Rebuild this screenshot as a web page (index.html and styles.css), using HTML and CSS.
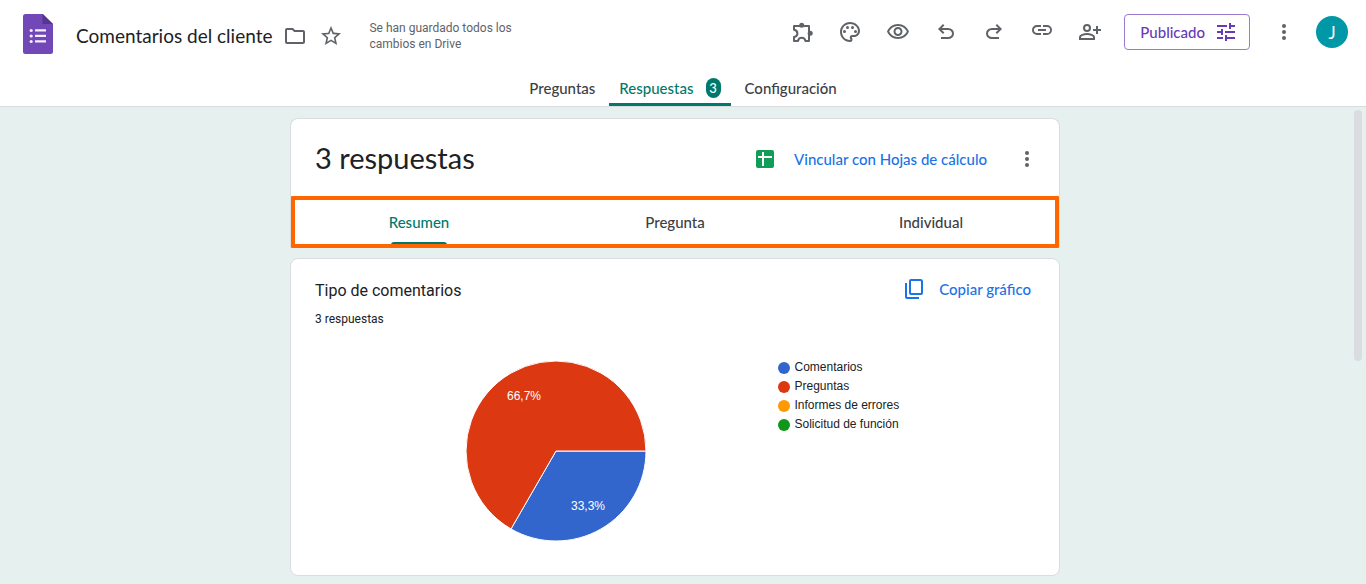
FILE: index.html
```html
<!DOCTYPE html>
<html lang="es">
<head>
<meta charset="utf-8">
<meta name="viewport" content="width=device-width, initial-scale=1">
<title>Comentarios del cliente</title>
<link rel="stylesheet" href="styles.css">
</head>
<body>
<header class="header">
  <div class="topbar">
    <div class="doc">
      <a class="logo" href="#" aria-label="Formularios">
        <svg width="30" height="40" viewBox="0 0 30 40"><path fill="#7248b9" d="M2.500 0H20l10 10v27.500a2.500 2.500 0 0 1-2.500 2.500h-25A2.500 2.500 0 0 1 0 37.500v-35A2.500 2.500 0 0 1 2.500 0z"/><path fill="#56358c" d="M19.500 0 30 10H19.500z"/><g fill="#f4effa"><circle cx="8.200" cy="16.500" r="1.600"/><circle cx="8.200" cy="22" r="1.600"/><circle cx="8.200" cy="27.500" r="1.600"/><path d="M12 15.300h11v2.300H12zM12 20.800h11v2.300H12zM12 26.300h11v2.300H12z"/></g></svg>
      </a>
      <h1 class="doc-title">Comentarios del cliente</h1>
      <button class="mini-btn" aria-label="Mover a carpeta"><svg class="icon" viewBox="0 0 24 24"><path d="m9.170 6 2 2H20v10H4V6h5.170M10 4H4c-1.100 0-1.990.9-1.990 2L2 18c0 1.100.9 2 2 2h16c1.100 0 2-.9 2-2V8c0-1.100-.9-2-2-2h-8l-2-2z"/></svg></button>
      <button class="mini-btn" aria-label="Destacar"><svg class="icon" viewBox="0 0 24 24"><path d="m22 9.240-7.190-.62L12 2 9.190 8.630 2 9.240l5.460 4.730L5.820 21 12 17.270 18.180 21l-1.630-7.030L22 9.240zM12 15.400l-3.760 2.270 1-4.280-3.320-2.880 4.380-.38L12 6.100l1.710 4.040 4.380.38-3.320 2.880 1 4.280L12 15.400z"/></svg></button>
      <p class="saved">Se han guardado todos los cambios en Drive</p>
    </div>
    <div class="actions">
      <button class="icon-btn" aria-label="Complementos"><svg class="icon" viewBox="0 0 24 24"><path fill="none" stroke="currentColor" stroke-width="2" stroke-linejoin="round" d="M4 6h15v15h-3.500c-.5-2.200-1.900-3.200-3.800-3.200S8.400 18.800 8 21H4v-4c2.200-.5 3.400-1.800 3.400-3.600S6.200 10.200 4 9.800z"/><circle cx="11.700" cy="5.300" r="2.500"/><circle cx="20.200" cy="13.300" r="2.500"/></svg></button>
      <button class="icon-btn" aria-label="Personalizar tema"><svg class="icon" viewBox="0 0 24 24"><path d="M12 22C6.490 22 2 17.510 2 12S6.490 2 12 2s10 4.040 10 9c0 3.310-2.690 6-6 6h-1.770c-.28 0-.5.22-.5.5 0 .12.05.23.13.33.41.47.64 1.060.64 1.670A2.500 2.500 0 0 1 12 22zm0-18c-4.410 0-8 3.590-8 8s3.590 8 8 8c.28 0 .5-.22.5-.5a.54.54 0 0 0-.14-.35c-.41-.46-.63-1.050-.63-1.650a2.500 2.500 0 0 1 2.500-2.500H16c2.210 0 4-1.790 4-4 0-3.860-3.590-7-8-7z"/><circle cx="6.500" cy="11.500" r="1.500"/><circle cx="9.500" cy="7.500" r="1.500"/><circle cx="14.500" cy="7.500" r="1.500"/><circle cx="17.500" cy="11.500" r="1.500"/></svg></button>
      <button class="icon-btn" aria-label="Vista previa"><svg class="icon" viewBox="0 0 24 24"><path d="M12 6c3.790 0 7.170 2.130 8.820 5.500C19.170 14.870 15.790 17 12 17s-7.170-2.130-8.820-5.500C4.830 8.130 8.210 6 12 6m0-2C7 4 2.730 7.110 1 11.500 2.730 15.890 7 19 12 19s9.270-3.110 11-7.500C21.270 7.110 17 4 12 4zm0 5c1.380 0 2.500 1.120 2.500 2.500S13.380 14 12 14s-2.500-1.120-2.500-2.500S10.620 9 12 9m0-2c-2.480 0-4.500 2.020-4.500 4.500S9.520 16 12 16s4.500-2.020 4.500-4.500S14.480 7 12 7z"/></svg></button>
      <button class="icon-btn" aria-label="Deshacer"><svg class="icon" viewBox="0 0 24 24"><path d="M7 19v-2h7.100q1.575 0 2.737-1Q18 15 18 13.500T16.837 11Q15.675 10 14.100 10H7.800l2.600 2.600L9 14 4 9l5-5 1.400 1.400L7.800 8h6.300q2.425 0 4.163 1.575Q20 11.150 20 13.500t-1.737 3.925Q16.525 19 14.100 19Z"/></svg></button>
      <button class="icon-btn" aria-label="Rehacer"><svg class="icon" viewBox="0 0 24 24"><path d="M17 19v-2H9.900q-1.575 0-2.737-1Q6 15 6 13.500T7.163 11Q8.325 10 9.900 10h6.300l-2.600 2.600L15 14l5-5-5-5-1.400 1.400L16.200 8H9.900Q7.475 8 5.737 9.575 4 11.150 4 13.500t1.737 3.925Q7.475 19 9.900 19Z"/></svg></button>
      <button class="icon-btn" aria-label="Copiar enlace"><svg class="icon" viewBox="0 2 24 24"><path d="M3.900 12c0-1.710 1.390-3.100 3.100-3.100h4V7H7a5 5 0 0 0 0 10h4v-1.900H7c-1.710 0-3.100-1.390-3.100-3.100zM8 13h8v-2H8zm9-6h-4v1.900h4a3.100 3.100 0 0 1 0 6.200h-4V17h4a5 5 0 0 0 0-10z"/></svg></button>
      <button class="icon-btn" aria-label="Compartir"><svg class="icon" viewBox="0 0 24 24"><g fill="none" stroke="currentColor" stroke-width="2"><circle cx="9" cy="8" r="3"/><path d="M2 19v-2c0-1.800 4-3 7-3s7 1.200 7 3v2z"/><path d="M19 6v8M15 10h8"/></g></svg></button>
      <button class="publish"><span>Publicado</span><svg class="icon" viewBox="0 0 24 24"><path d="M3 17v2h6v-2zM3 5v2h10V5zm10 16v-2h8v-2h-8v-2h-2v6zM7 9v2H3v2h4v2h2V9zm14 4v-2H11v2zm-6-4h2V7h4V5h-4V3h-2z"/></svg></button>
      <button class="icon-btn" aria-label="Más"><svg class="icon" viewBox="0 0 24 24"><circle cx="12" cy="6" r="2"/><circle cx="12" cy="12" r="2"/><circle cx="12" cy="18" r="2"/></svg></button>
      <button class="avatar" aria-label="Cuenta de J">J</button>
    </div>
  </div>
  <nav class="tabs">
    <a class="tab" href="#preguntas">Preguntas</a>
    <a class="tab tab-active" href="#respuestas" aria-current="page">Respuestas <span class="count">3</span></a>
    <a class="tab" href="#configuracion">Configuración</a>
  </nav>
</header>
<div class="page">
  <main class="content">
    <section class="card summary">
      <div class="summary-head">
        <h2 class="summary-title">3 respuestas</h2>
        <button class="text-btn"><svg class="sheets" width="18" height="18" viewBox="0 0 18 18"><rect width="18" height="18" rx="2" fill="#0f9d58"/><path fill="#fff" d="M2 6h4V2h2v4h8v2H8v8H6V8H2z"/></svg><span>Vincular con Hojas de cálculo</span></button>
        <button class="icon-btn" aria-label="Más opciones"><svg class="icon" viewBox="0 0 24 24"><circle cx="12" cy="6" r="2"/><circle cx="12" cy="12" r="2"/><circle cx="12" cy="18" r="2"/></svg></button>
      </div>
      <nav class="views">
        <a class="view view-active" href="#resumen" aria-current="page">Resumen</a>
        <a class="view" href="#pregunta">Pregunta</a>
        <a class="view" href="#individual">Individual</a>
      </nav>
    </section>
    <section class="card question">
      <div class="question-head">
        <div>
          <h3 class="question-title">Tipo de comentarios</h3>
          <p class="question-count">3 respuestas</p>
        </div>
        <button class="text-btn copy"><svg class="icon" viewBox="0 0 24 24"><path fill="none" stroke="currentColor" stroke-width="2" d="M8 3h9.500q1.500 0 1.500 1.500V16q0 1-1 1H8q-1 0-1-1V4q0-1 1-1z"/><path fill="none" stroke="currentColor" stroke-width="2" d="M3 6v14q0 1 1 1h12"/></svg><span>Copiar gráfico</span></button>
      </div>
      <div class="chart">
        <svg class="pie" width="182" height="182" viewBox="-91 -91 182 182" role="img" aria-label="Gráfico circular">
          <g stroke="#fff" stroke-width="1"><path fill="#3366cc" d="M0 0H90A90 90 0 0 1-45 77.940z"/><path fill="#dc3912" d="M0 0-45 77.940A90 90 0 1 1 90 0z"/></g>
          <text x="-32" y="-51">66,7%</text><text x="32" y="59">33,3%</text>
        </svg>
        <ul class="legend">
          <li class="legend-item blue">Comentarios</li>
          <li class="legend-item red">Preguntas</li>
          <li class="legend-item orange">Informes de errores</li>
          <li class="legend-item green">Solicitud de función</li>
        </ul>
      </div>
    </section>
  </main>
  <div class="scroll-track"><div class="scroll-thumb"></div></div>
</div>
</body>
</html>
```
FILE: styles.css
```css
* { box-sizing: border-box; }
body {
  margin: 0;
  min-height: 100vh;
  display: flex;
  flex-direction: column;
  background: #e6f0ef;
  color: #202124;
  font-family: Lato, "Liberation Sans", sans-serif;
  font-size: 15px;
}
h1, h2, h3, p, ul { margin: 0; padding: 0; font-weight: 400; }
a { color: inherit; text-decoration: none; }
button {
  display: flex;
  align-items: center;
  justify-content: center;
  padding: 0;
  border: 0;
  background: none;
  color: #5f6368;
  font: inherit;
  cursor: pointer;
}
.icon { width: 24px; height: 24px; fill: currentColor; flex: none; display: block; }

.header { background: #fff; border-bottom: 1px solid #dadce0; }
.topbar {
  display: flex;
  align-items: center;
  justify-content: space-between;
  height: 64px;
  padding: 0 18px 0 23px;
}
.doc { display: flex; align-items: center; padding-top: 8px; }
.logo { margin: 0 23px 4px 0; }
.logo svg { display: block; }
.doc-title { margin-right: 5px; font-size: 19px; line-height: 24px; white-space: nowrap; }
.mini-btn { width: 36px; height: 36px; }
.saved {
  width: 168px;
  margin-left: 20px;
  color: #5f6368;
  font-family: Roboto, sans-serif;
  font-size: 12px;
  line-height: 16px;
}
.actions { display: flex; align-items: center; }
.icon-btn { width: 48px; height: 48px; flex: none; }
.publish {
  height: 36px;
  margin: 0 10px;
  padding: 0 11px 0 15px;
  gap: 9px;
  border: 1px solid #9a7bd0;
  border-radius: 4px;
  color: #673ab7;
  font-weight: 500;
}
.avatar {
  width: 32px;
  height: 32px;
  margin-left: 8px;
  border-radius: 50%;
  background: #0097a7;
  color: #fff;
  font-size: 17px;
}
.tabs { display: flex; justify-content: center; gap: 4px; height: 42px; color: #3c4043; font-weight: 500; }
.tab {
  display: flex;
  align-items: center;
  gap: 12px;
  padding: 9px 10px 0;
  border-bottom: 3px solid transparent;
}
.tab-active { color: #00796b; border-bottom-color: #00796b; border-radius: 2px 2px 0 0; }
.count {
  min-width: 15px;
  border-radius: 8px;
  background: #00796b;
  color: #fff;
  font-size: 13px;
  line-height: 20px;
  text-align: center;
}

.page { flex: 1; display: flex; }
.content {
  flex: 1;
  display: flex;
  flex-direction: column;
  align-items: center;
  gap: 10px;
  padding: 11px 0 8px;
}
.card { width: 100%; max-width: 770px; background: #fff; border: 1px solid #dadce0; border-radius: 8px; }
.summary { border-bottom: 0; border-radius: 8px 8px 0 0; }
.summary-head { display: flex; align-items: center; gap: 16px; height: 77px; padding: 2px 8px 0 24px; }
.summary-title { flex: 1; padding-bottom: 2px; font-size: 29px; line-height: 36px; }
.text-btn { gap: 20px; color: #1a73e8; font-weight: 500; }
.views { position: relative; display: grid; grid-template-columns: repeat(3, 1fr); height: 52px; color: #3c4043; font-weight: 500; }
.views::after {
  content: "";
  position: absolute;
  inset: 0;
  border: 4px solid #ff6600;
  border-radius: 1px;
  pointer-events: none;
}
.view { display: flex; flex-direction: column; align-items: center; justify-content: space-between; line-height: 20px; padding-top: 16px; }
.view-active { color: #00796b; }
.view-active::after { content: ""; width: 56px; height: 6px; border-radius: 3px 3px 0 0; background: #00796b; }
.question { padding: 18px 28px 33px 24px; }
.question-head { display: flex; justify-content: space-between; align-items: flex-start; }
.question-title { font-family: Roboto, sans-serif; font-size: 16px; line-height: 28px; }
.question-count { margin-top: 4px; font-family: Roboto, sans-serif; font-size: 12px; line-height: 20px; }
.copy { height: 24px; gap: 12px; }
.chart { display: flex; align-items: flex-start; justify-content: center; gap: 131px; margin-top: 31px; padding-left: 18px; }
.pie text { fill: #fff; font: 12px "Liberation Sans", sans-serif; text-anchor: middle; }
.legend { list-style: none; min-width: 122px; margin-top: -2px; font: 12px/19px "Liberation Sans", sans-serif; }
.legend-item { display: flex; align-items: center; gap: 5px; }
.legend-item::before { content: ""; width: 12px; height: 12px; border-radius: 50%; background: var(--dot); }
.blue { --dot: #3366cc; }
.red { --dot: #dc3912; }
.orange { --dot: #ff9900; }
.green { --dot: #109618; }
.scroll-track { width: 16px; padding: 3px 4px; }
.scroll-thumb { height: 251px; border-radius: 4px; background: #dadce0; }
```
